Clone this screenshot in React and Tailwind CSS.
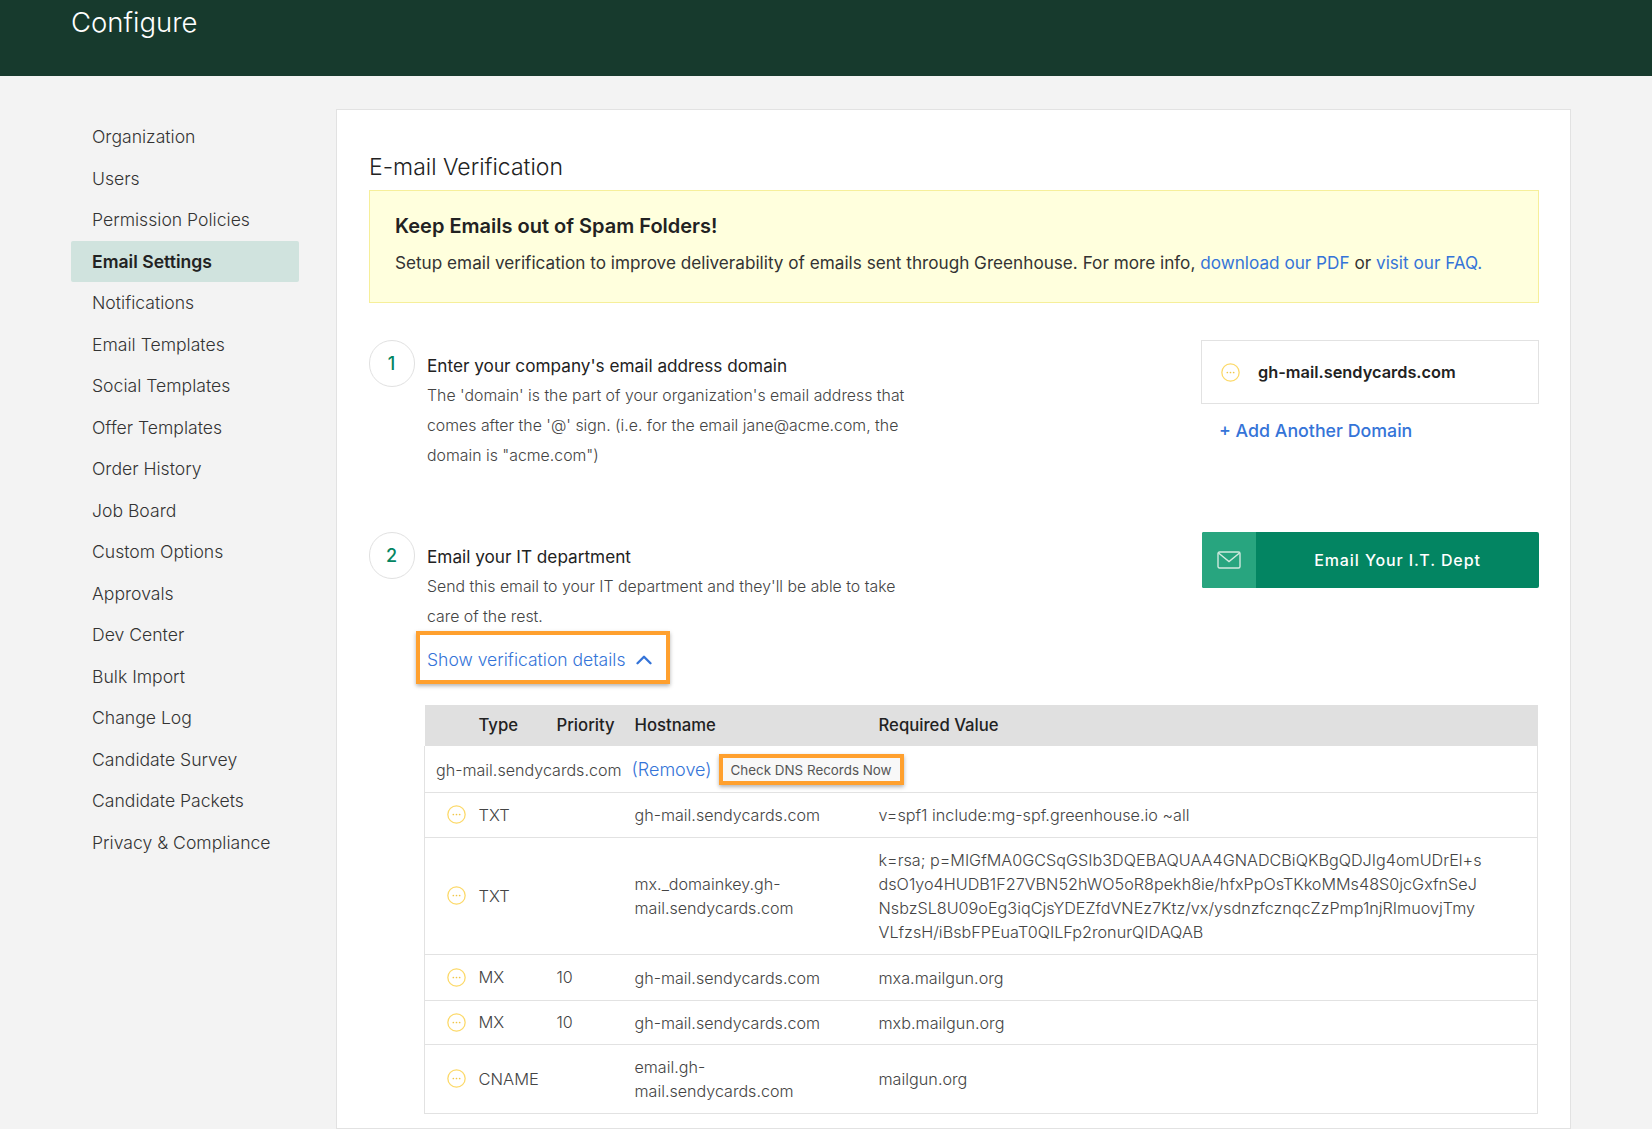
import React from "react";
import { ChevronUp } from "lucide-react";

const nav = ["Organization","Users","Permission Policies","Email Settings","Notifications","Email Templates","Social Templates","Offer Templates","Order History","Job Board","Custom Options","Approvals","Dev Center","Bulk Import","Change Log","Candidate Survey","Candidate Packets","Privacy & Compliance"];

function Pending({ className = "" }) {
  return (
    <svg viewBox="0 0 18 18" className={"w-[19px] h-[19px] " + className} fill="none">
      <circle cx="9" cy="9" r="8.2" stroke="#fcd968" strokeWidth="1.2" />
      <circle cx="6" cy="9" r="0.8" fill="#f0c648" />
      <circle cx="9" cy="9" r="0.8" fill="#f0c648" />
      <circle cx="12" cy="9" r="0.8" fill="#f0c648" />
    </svg>
  );
}

function Circle({ n }) {
  return (
    <div className="w-[46px] h-[47px] shrink-0 rounded-full border border-[#e1e1e1] flex items-center justify-center text-[18px] font-medium text-[#038562] pb-[1px] pr-[1px]">{n}</div>
  );
}

const rows = [
  { type: "TXT", pr: "", host: ["gh-mail.sendycards.com"], val: ["v=spf1 include:mg-spf.greenhouse.io ~all"], h: "h-[45px]" },
  { type: "TXT", pr: "", host: ["mx._domainkey.gh-", "mail.sendycards.com"], val: ["k=rsa; p=MIGfMA0GCSqGSIb3DQEBAQUAA4GNADCBiQKBgQDJIg4omUDrEl+s", "dsO1yo4HUDB1F27VBN52hWO5oR8pekh8ie/hfxPpOsTKkoMMs48S0jcGxfnSeJ", "NsbzSL8U09oEg3iqCjsYDEZfdVNEz7Ktz/vx/ysdnzfcznqcZzPmp1njRImuovjTmy", "VLfzsH/iBsbFPEuaT0QILFp2ronurQIDAQAB"], h: "h-[117px]" },
  { type: "MX", pr: "10", host: ["gh-mail.sendycards.com"], val: ["mxa.mailgun.org"], h: "h-[46px]" },
  { type: "MX", pr: "10", host: ["gh-mail.sendycards.com"], val: ["mxb.mailgun.org"], h: "h-[44px]" },
  { type: "CNAME", pr: "", host: ["email.gh-", "mail.sendycards.com"], val: ["mailgun.org"], h: "h-[69px]" },
];

export default function App() {
  return (
    <div className="h-screen overflow-hidden flex flex-col bg-[#f3f3f3] text-[#222] font-['Inter','Liberation_Sans',sans-serif] font-light">
      <header className="h-[76px] shrink-0 bg-[#173a2d] px-[71px] pt-[5px]">
        <h1 className="text-[27.5px] leading-[34px] font-light text-white">Configure</h1>
      </header>
      <div className="flex flex-1 min-h-0 pl-[71px] pr-[81px]">
        <nav className="w-[228px] shrink-0 pt-[40px]">
          {nav.map((n) => (
            <div key={n} className={"h-[41.5px] flex items-center pl-[21px] pt-[1px] text-[17.6px] rounded-[2px] " + (n === "Email Settings" ? "bg-[#d0e3de] font-semibold text-[#222]" : "text-[#333]")}>{n}</div>
          ))}
        </nav>
        <main className="ml-[37px] flex-1 mt-[33px] bg-white border border-[#e2e2e2] pl-[32px] pr-[31px] pt-[43px]">
          <h2 className="text-[23px] leading-[28px] text-[#222] mb-[9px]">E-mail Verification</h2>
          <section className="h-[113px] bg-[#ffffdd] border border-[#f6ef9a] pl-[25px] pt-[21.5px]">
            <h3 className="text-[20px] leading-[26px] font-semibold text-[#222]">Keep Emails out of Spam Folders!</h3>
            <p className="mt-[11.5px] text-[17.16px] leading-[26px] font-normal text-[#333]">Setup email verification to improve deliverability of emails sent through Greenhouse. For more info, <a className="text-[#3574d8]">download our PDF</a> or <a className="text-[#3574d8]">visit our FAQ.</a></p>
          </section>

          <section className="mt-[37px] h-[192px] flex justify-between">
            <div className="flex">
              <Circle n="1" />
              <div className="ml-[12px]">
                <h4 className="text-[17.2px] leading-[26px] mt-[12.5px] font-normal text-[#222]">Enter your company's email address domain</h4>
                <p className="text-[15.85px] leading-[30px] mt-[2px] text-[#444]">The 'domain' is the part of your organization's email address that<br />comes after the '@' sign. (i.e. for the email jane@acme.com, the<br />domain is "acme.com")</p>
              </div>
            </div>
            <div className="w-[338px]">
              <div className="h-[64px] border border-[#e2e2e2] flex items-center pl-[19px]">
                <Pending />
                <span className="ml-[18px] text-[16.35px] font-semibold text-[#222]">gh-mail.sendycards.com</span>
              </div>
              <div className="mt-[14px] pl-[18px] text-[17.8px] leading-[26px] font-medium text-[#3574d8]">+ Add Another Domain</div>
            </div>
          </section>

          <section className="flex justify-between">
            <div className="flex">
              <Circle n="2" />
              <div className="ml-[12px]">
                <h4 className="text-[17.2px] leading-[26px] mt-[11.5px] font-normal text-[#222]">Email your IT department</h4>
                <p className="text-[15.85px] leading-[30px] mt-[2.5px] text-[#444]">Send this email to your IT department and they'll be able to take<br />care of the rest.</p>
                <div className="-ml-[11px] -mt-[1px] w-[254px] h-[53px] border-[4px] border-[#ffa02e] shadow-[0_2px_4px_rgba(0,0,0,0.3)] flex items-center pl-[7px] pt-[5px] text-[17.55px] text-[#3574d8]">
                  Show verification details
                  <ChevronUp className="ml-[6px] w-[26px] h-[26px]" strokeWidth={2.2} />
                </div>
              </div>
            </div>
            <button className="w-[337px] h-[56px] flex rounded-[2px] bg-[#038562] text-white overflow-hidden">
              <span className="w-[54px] h-full bg-[#28a57f] flex items-center justify-center">
                <svg viewBox="0 0 24 18" className="w-[24px] h-[18px]" fill="none" stroke="#cfe9df" strokeWidth="1.4">
                  <rect x="1" y="1" width="22" height="16" rx="1.5" />
                  <path d="M1.5 2 L12 10.5 L22.5 2" />
                </svg>
              </span>
              <span className="flex-1 flex items-center justify-center text-[16px] font-medium tracking-[0.9px]">Email Your I.T. Dept</span>
            </button>
          </section>

          <div className="mt-[21px] ml-[55px] mr-[1px]">
            <table className="w-full table-fixed border-collapse text-[16.1px] text-[#444]">
              <colgroup>
                <col className="w-[54px]" />
                <col className="w-[78px]" />
                <col className="w-[78px]" />
                <col className="w-[244px]" />
                <col />
              </colgroup>
              <thead>
                <tr className="h-[41px] bg-[#e0e0e0] text-left text-[16.7px] text-[#222]">
                  <th />
                  <th className="font-medium">Type</th>
                  <th className="font-medium">Priority</th>
                  <th className="font-medium">Hostname</th>
                  <th className="font-medium">Required Value</th>
                </tr>
              </thead>
              <tbody>
                <tr className="h-[46px] border-x border-b border-[#e2e2e2]">
                  <td colSpan={5} className="pl-[11px]">
                    <div className="flex items-center pt-[2px]">
                      <span>gh-mail.sendycards.com</span>
                      <a className="ml-[10px] text-[18px] text-[#3574d8]">(Remove)</a>
                      <div className="ml-[7px] w-[185px] h-[31px] border-[4px] border-[#ffa02e] shadow-[0_2px_4px_rgba(0,0,0,0.3)] flex items-center justify-center text-[13.4px] font-normal text-[#555] bg-[#f8f8f8]">Check DNS Records Now</div>
                    </div>
                  </td>
                </tr>
                {rows.map((r, i) => (
                  <tr key={i} className={r.h + " border-x border-b border-[#e2e2e2]"}>
                    <td className="pl-[22px]"><Pending /></td>
                    <td className="text-[16.5px] pt-[1px]">{r.type}</td>
                    <td className="pt-[1px]">{r.pr}</td>
                    <td className="leading-[24px] pt-[1px]">{r.host.map((t, j) => <div key={j}>{t}</div>)}</td>
                    <td className="leading-[24px] pt-[1px] text-[16.2px]">{r.val.map((t, j) => <div key={j}>{t}</div>)}</td>
                  </tr>
                ))}
              </tbody>
            </table>
          </div>
        </main>
      </div>
    </div>
  );
}
